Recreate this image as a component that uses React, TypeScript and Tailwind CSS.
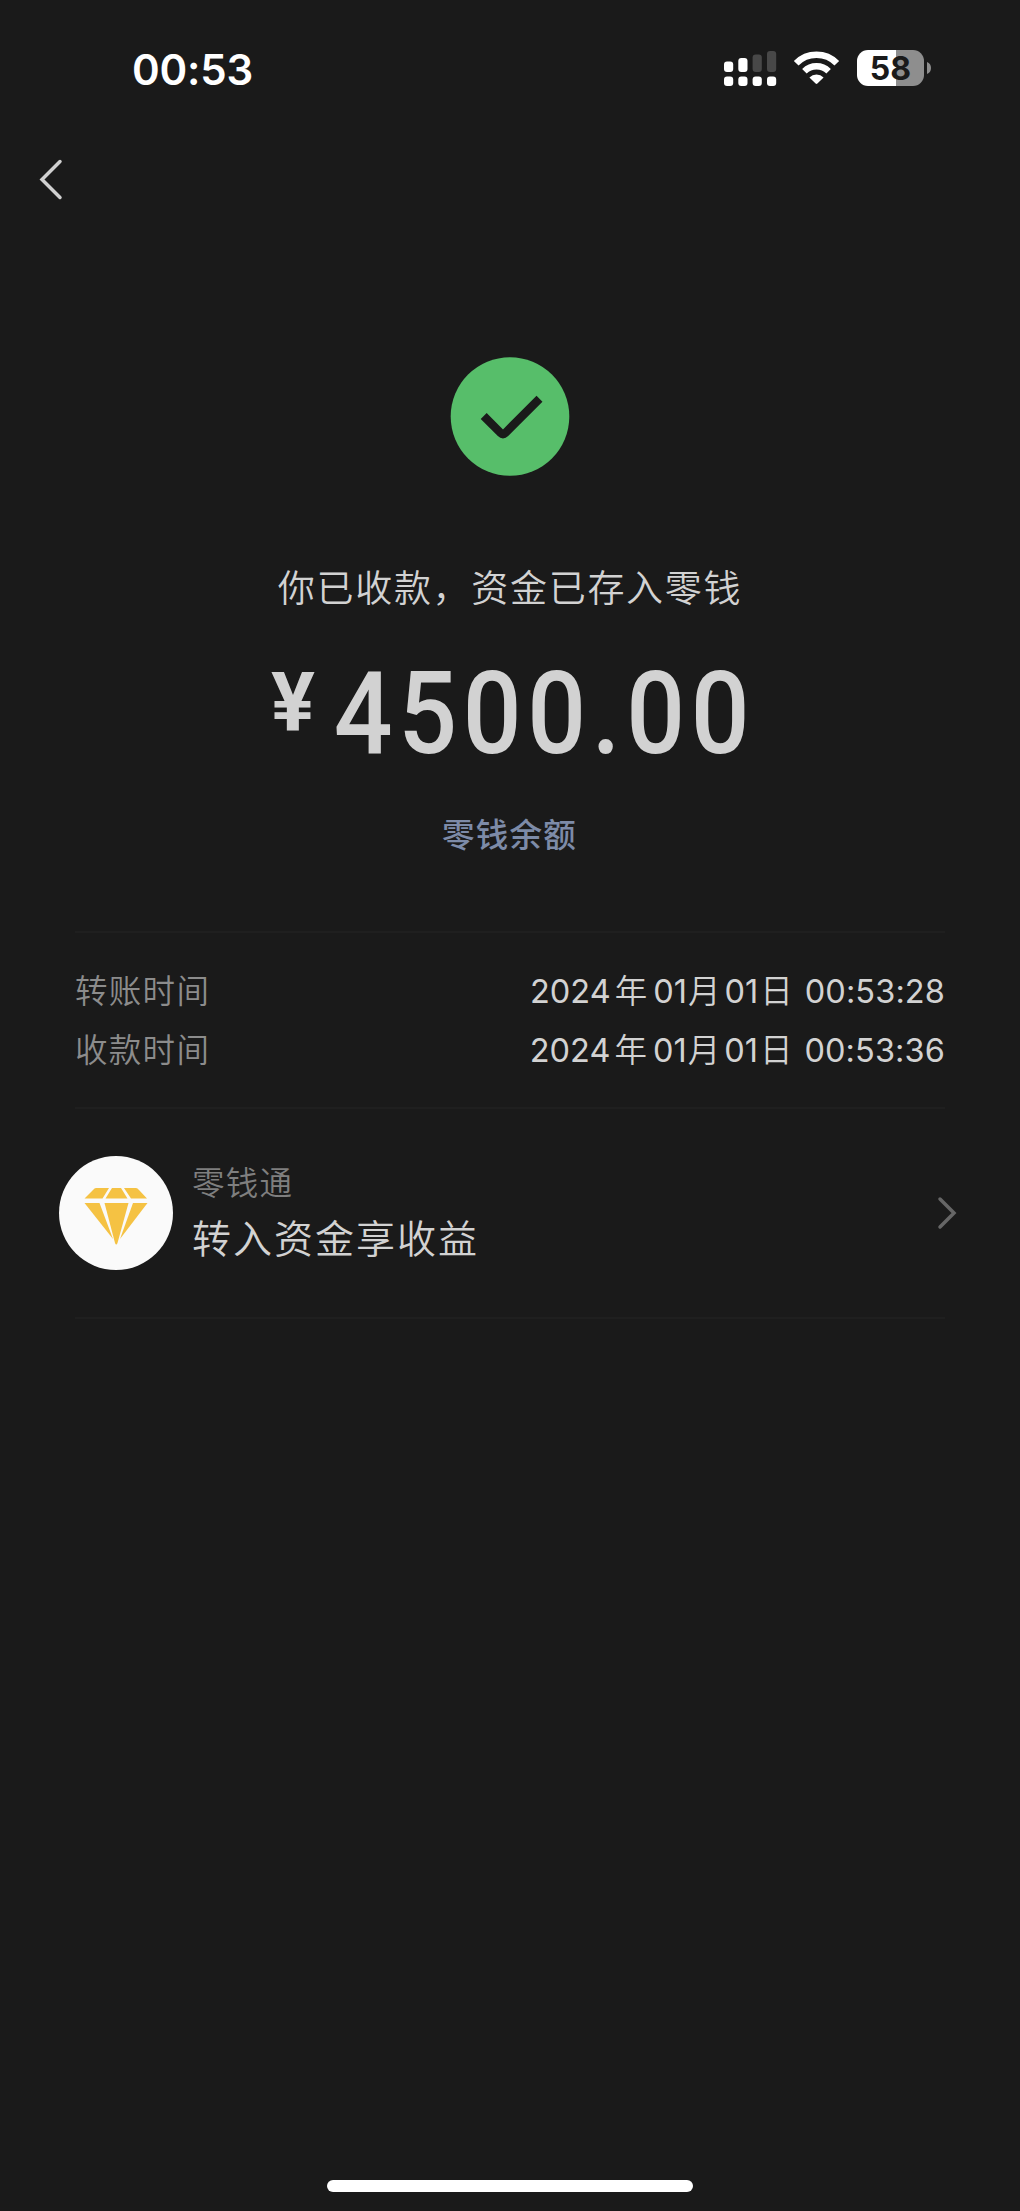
const sans = "font-['Inter','Noto_Sans_CJK_SC',sans-serif]";

function Signal() {
  return (
    <svg className="h-[36px] w-[53px]" viewBox="0 0 53 36" fill="#fff">
      <rect x="0" y="11.5" width="9.2" height="10.5" rx="3" />
      <rect x="14.3" y="8" width="9.2" height="14" rx="3" />
      <rect x="28.6" y="4.5" width="9.2" height="17.5" rx="3" fill="#484848" />
      <rect x="43" y="1" width="9.2" height="21" rx="3" fill="#484848" />
      <rect x="0" y="26.5" width="9.2" height="9.5" rx="3" />
      <rect x="14.3" y="26.5" width="9.2" height="9.5" rx="3" />
      <rect x="28.6" y="26.5" width="9.2" height="9.5" rx="3" />
      <rect x="43" y="26.5" width="9.2" height="9.5" rx="3" />
    </svg>
  );
}

function Wifi() {
  return (
    <svg className="h-[34px] w-[47px]" viewBox="0 0 47 34">
      <path d="M3.2 12.2A28.6 28.6 0 0 1 43.8 12.2" fill="none" stroke="#fff" strokeWidth="6.6" />
      <path d="M11.4 20.2A17.2 17.2 0 0 1 35.6 20.2" fill="none" stroke="#fff" strokeWidth="6.4" />
      <path d="M16.4 26.4A10.4 10.4 0 0 1 30.6 26.4L24.4 32.6Q23.5 33.5 22.6 32.6Z" fill="#fff" />
    </svg>
  );
}

function Battery() {
  return (
    <div className="flex items-center">
      <div className="flex h-[36px] w-[67px] items-center justify-center rounded-[11px] bg-[linear-gradient(90deg,#fff_39px,#8e8e8e_39px)]">
        <span className="pt-[1px] text-[32px] leading-[36px] font-bold text-[#1a1a1a]">58</span>
      </div>
      <svg className="ml-[3px] h-[12px] w-[4px]" viewBox="0 0 4 12">
        <path d="M0 0Q4 1.500 4 6T0 12Z" fill="#8e8e8e" />
      </svg>
    </div>
  );
}

function DateRow({ label, time }: { label: string; time: string }) {
  return (
    <div className="flex h-[59px] items-center justify-between text-[32.500px]">
      <span className="font-[350] tracking-[1.300px] text-[#8c8c8c]">{label}</span>
      <span className="flex items-center text-[#d2d2d2]">
        <span>2024</span>
        <span className="ml-[4px] font-[350]">年</span>
        <span className="ml-[6px]">01</span>
        <span className="ml-[1px] font-[350]">月</span>
        <span className="ml-[4px]">01</span>
        <span className="ml-[2px] font-[350]">日</span>
        <span className="ml-[12px] tracking-[0.1px]">{time}</span>
      </span>
    </div>
  );
}

export default function App() {
  return (
    <div className={`flex h-[2211px] w-[1020px] flex-col bg-[#1a1a1a] ${sans}`}>
      <div className="flex h-[136px] shrink-0 items-center justify-between pr-[89px] pl-[132px]">
        <span className="pt-[4px] text-[42px] leading-[48px] font-semibold tracking-[-0.2px] text-white">00:53</span>
        <div className="flex items-center">
          <Signal />
          <div className="ml-[16px]"><Wifi /></div>
          <div className="ml-[17px]"><Battery /></div>
        </div>
      </div>
      <div className="flex h-[86px] shrink-0 items-center pl-[38px]">
        <svg className="h-[44px] w-[26px]" viewBox="0 0 26 44" fill="none">
          <path d="M22 4.500L4 22.500L22 40.500" stroke="#d0d0d0" strokeWidth="3.500" strokeLinecap="round" />
        </svg>
      </div>
      <main className="flex flex-1 flex-col px-[75px]">
        <section className="flex h-[711px] flex-col items-center border-b-2 border-[#1f1f1f] pt-[135px]">
          <svg className="h-[120px] w-[120px] shrink-0" viewBox="0 0 120 120" fill="none">
            <circle cx="60" cy="59.500" r="59.300" fill="#57be6a" />
            <path d="M33.700 59L50.800 76.100Q53 78.300 55.200 76.100L89.500 41.800" stroke="#1a1a1a" strokeWidth="8.400" />
          </svg>
          <p className="mt-[85px] h-[54px] text-[37px] leading-[54px] font-[350] tracking-[1.700px] text-[#d2d2d2]">你已收款，资金已存入零钱</p>
          <div className="mt-[43px] ml-[6px] flex h-[110px] w-[484px] items-start justify-between font-['Roboto',sans-serif] text-[#d2d2d2]">
            <span className="mt-[3px] text-[82px] leading-[80px] font-bold">¥</span>
            <span className="-ml-[60px] origin-right scale-x-90 text-[115px] leading-[110px] font-medium tracking-[6.300px]">4500.00</span>
          </div>
          <a className="mt-[43px] mr-[1px] text-[32.500px] leading-[48px] font-medium tracking-[1.200px] text-[#7d8ba8]">零钱余额</a>
        </section>
        <section className="flex h-[176px] flex-col justify-center border-b-2 border-[#1f1f1f] pt-[3px]">
          <DateRow label="转账时间" time="00:53:28" />
          <DateRow label="收款时间" time="00:53:36" />
        </section>
        <section className="-mx-[16px] flex h-[208px] items-center">
          <div className="flex h-[114px] w-[114px] items-center justify-center rounded-full bg-[#fafafa] pt-[5px]">
            <svg className="h-[58px] w-[64px]" viewBox="0 0 64 58" fill="#f5c243">
              <path d="M12 1H25L18.500 11.500H0.500L9 3Q10.500 1 12 1Z" />
              <path d="M28 1H37L43.500 11.500H21.500Z" />
              <path d="M40 1H52Q53.500 1 55 3L63 11.500H47Z" />
              <path d="M0.500 16H15.500L29 52Z" />
              <path d="M20.500 16H44.500L33.500 56Q32.300 59 31 56Z" />
              <path d="M49 16H63.500L36 52Z" />
            </svg>
          </div>
          <div className="ml-[19px] flex flex-col pt-[2px]">
            <span className="text-[32.500px] leading-[50px] font-[350] tracking-[1.300px] text-[#7f7f7f]">零钱通</span>
            <span className="text-[39px] leading-[60px] font-[350] tracking-[2px] text-[#d2d2d2]">转入资金享收益</span>
          </div>
          <svg className="mr-[4px] ml-auto h-[34px] w-[20px]" viewBox="0 0 20 34" fill="none">
            <path d="M3 3L17 17L3 31" stroke="#666" strokeWidth="3.500" strokeLinecap="round" />
          </svg>
        </section>
        <div className="h-[2px] bg-[#1f1f1f]" />
      </main>
      <div className="flex h-[31px] shrink-0 items-start justify-center">
        <div className="h-[12px] w-[366px] rounded-full bg-white" />
      </div>
    </div>
  );
}
